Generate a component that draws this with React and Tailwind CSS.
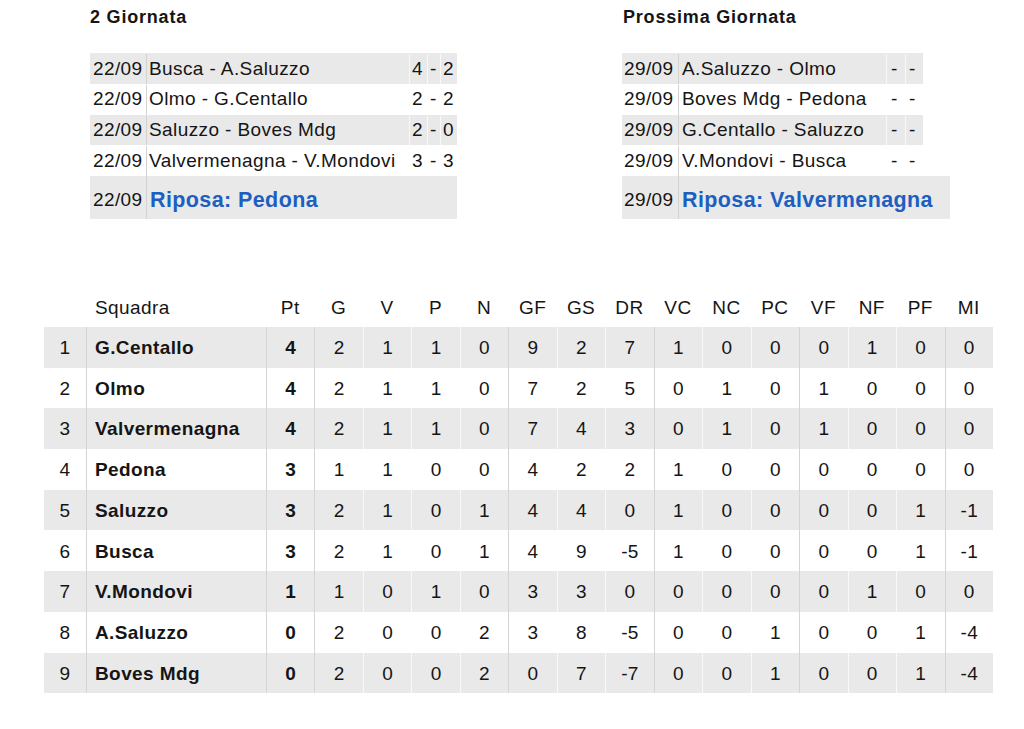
import React from "react";

const left = [
  ["22/09", "Busca - A.Saluzzo", "4", "-", "2"],
  ["22/09", "Olmo - G.Centallo", "2", "-", "2"],
  ["22/09", "Saluzzo - Boves Mdg", "2", "-", "0"],
  ["22/09", "Valvermenagna - V.Mondovi", "3", "-", "3"],
];
const right = [
  ["29/09", "A.Saluzzo - Olmo"],
  ["29/09", "Boves Mdg - Pedona"],
  ["29/09", "G.Centallo - Saluzzo"],
  ["29/09", "V.Mondovi - Busca"],
];

const heads = ["Pt", "G", "V", "P", "N", "GF", "GS", "DR", "VC", "NC", "PC", "VF", "NF", "PF", "MI"];
const strong = new Set([0, 1, 5, 8, 11, 14]);

const rows = [
  ["G.Centallo", 4, 2, 1, 1, 0, 9, 2, 7, 1, 0, 0, 0, 1, 0, 0],
  ["Olmo", 4, 2, 1, 1, 0, 7, 2, 5, 0, 1, 0, 1, 0, 0, 0],
  ["Valvermenagna", 4, 2, 1, 1, 0, 7, 4, 3, 0, 1, 0, 1, 0, 0, 0],
  ["Pedona", 3, 1, 1, 0, 0, 4, 2, 2, 1, 0, 0, 0, 0, 0, 0],
  ["Saluzzo", 3, 2, 1, 0, 1, 4, 4, 0, 1, 0, 0, 0, 0, 1, -1],
  ["Busca", 3, 2, 1, 0, 1, 4, 9, -5, 1, 0, 0, 0, 0, 1, -1],
  ["V.Mondovi", 1, 1, 0, 1, 0, 3, 3, 0, 0, 0, 0, 0, 1, 0, 0],
  ["A.Saluzzo", 0, 2, 0, 0, 2, 3, 8, -5, 0, 0, 1, 0, 0, 1, -4],
  ["Boves Mdg", 0, 2, 0, 0, 2, 0, 7, -7, 0, 0, 1, 0, 0, 1, -4],
];

export default function App() {
  return (
    <div className="min-h-[729px] w-[1024px] bg-white font-['Liberation_Sans',Arial,sans-serif] text-[#151515]">
      <div className="flex pl-[90px] pt-[7px]">
        <div className="w-[532px]">
          <div className="h-[20px] text-[18px] font-bold leading-[20px] tracking-[0.8px]">2 Giornata</div>
          <div className="mt-[26px] w-[367px] text-[19px] tracking-[0.4px]">
            {left.map((r, i) => (
              <div key={i} className={`flex h-[30.75px] items-center pt-[1px] ${i % 2 === 0 ? "bg-[#e9e9e9]" : "bg-white"}`}>
                <div className="flex h-full w-[57px] items-center border-r border-[#d2d2d2] pl-[3px]">{r[0]}</div>
                <div className="flex h-full w-[262px] items-center whitespace-nowrap pl-[2px]">{r[1]}</div>
                <div className="flex h-full w-[18px] items-center border-l border-white/70 pl-[2px]">{r[2]}</div>
                <div className="flex h-full w-[13px] items-center border-l border-white/70 pl-[2px]">{r[3]}</div>
                <div className="flex h-full w-[17px] items-center border-l border-white/70 pl-[2px]">{r[4]}</div>
              </div>
            ))}
            <div className="flex h-[43px] bg-[#e9e9e9]">
              <div className="flex h-full w-[57px] border-r border-[#d2d2d2] pl-[3px] pt-[10px]">22/09</div>
              <div className="whitespace-nowrap pl-[3px] pt-[12px] text-[21.5px] font-bold leading-[24px] text-[#1c5fc1]">
                Riposa: Pedona
              </div>
            </div>
          </div>
        </div>
        <div>
          <div className="h-[20px] pl-[1px] text-[18px] font-bold leading-[20px] tracking-[0.8px]">Prossima Giornata</div>
          <div className="mt-[26px] text-[19px] tracking-[0.4px]">
            {right.map((r, i) => (
              <div key={i} className={`flex h-[30.75px] w-[301px] items-center pt-[1px] ${i % 2 === 0 ? "bg-[#e9e9e9]" : "bg-white"}`}>
                <div className="flex h-full w-[57px] items-center border-r border-[#d2d2d2] pl-[2px]">{r[0]}</div>
                <div className="flex h-full w-[207px] items-center whitespace-nowrap pl-[3px]">{r[1]}</div>
                <div className="flex h-full w-[19px] items-center border-l border-white/70 pl-[4px]">-</div>
                <div className="flex h-full w-[18px] items-center border-l border-white/70 pl-[3px]">-</div>
              </div>
            ))}
            <div className="flex h-[43px] w-[328px] bg-[#e9e9e9]">
              <div className="flex h-full w-[57px] border-r border-[#d2d2d2] pl-[2px] pt-[10px]">29/09</div>
              <div className="whitespace-nowrap pl-[3px] pt-[12px] text-[21.5px] font-bold leading-[24px] text-[#1c5fc1]">
                Riposa: Valvermenagna
              </div>
            </div>
          </div>
        </div>
      </div>

      <div className="ml-[44px] mt-[68px] w-[949px] text-[19px] tracking-[0.4px]">
        <div className="grid h-[40px] grid-cols-[42px_180px_repeat(15,1fr)] items-center pt-[2px]">
          <div />
          <div className="pl-[9px]">Squadra</div>
          {heads.map((h) => (
            <div key={h} className="text-center">{h}</div>
          ))}
        </div>
        {rows.map((r, i) => (
          <div
            key={i}
            className={`grid h-[40.7px] grid-cols-[42px_180px_repeat(15,1fr)] ${i % 2 === 0 ? "bg-[#e9e9e9]" : "bg-white"}`}
          >
            <div className="flex items-center justify-center pt-[2px]">{i + 1}</div>
            <div className="flex items-center whitespace-nowrap border-l border-[#d4d4d4] pl-[8px] pt-[2px] font-bold">{r[0]}</div>
            {r.slice(1).map((v, j) => (
              <div
                key={j}
                className={`flex items-center justify-center border-l pt-[2px] ${strong.has(j) ? "border-[#d4d4d4]" : "border-white/70"} ${j === 0 ? "font-bold" : ""}`}
              >
                {v}
              </div>
            ))}
          </div>
        ))}
      </div>
    </div>
  );
}
